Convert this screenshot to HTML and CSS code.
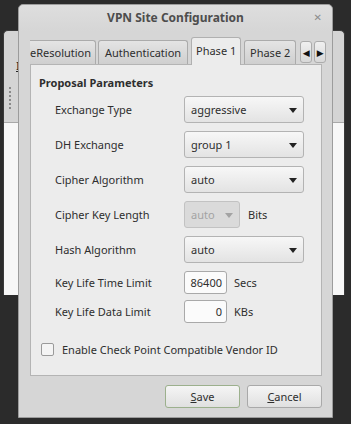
FILE: index.html
```html
<!DOCTYPE html>
<html lang="en">
<head>
    <meta charset="UTF-8">
    <meta name="viewport" content="width=device-width, initial-scale=1.0">
    <link rel="stylesheet" href="styles.css">
    <title>VPN Site Configuration</title>
</head>
<body>
    <div class="desktop">
        <!-- window behind the dialog -->
        <div class="parentWin">
            <span class="mnemonic">I</span>
            <div class="grip"></div>
            <div class="parentBody"></div>
        </div>

        <div class="dialog">
            <div class="titleBar">
                <span class="title">VPN Site Configuration</span>
                <span class="close">&#x2715;</span>
            </div>
            <div class="tabs">
                <div class="tab first">eResolution</div>
                <div class="tab">Authentication</div>
                <div class="tab active">Phase 1</div>
                <div class="tab">Phase 2</div>
                <div class="scroll">
                    <span class="arrow">&#9664;</span>
                    <span class="arrow">&#9654;</span>
                </div>
            </div>
            <div class="panel">
                <div class="groupTitle">Proposal Parameters</div>
                <div class="row">
                    <span class="label">Exchange Type</span>
                    <div class="combo">aggressive<span class="caret"></span></div>
                </div>
                <div class="row">
                    <span class="label">DH Exchange</span>
                    <div class="combo">group 1<span class="caret"></span></div>
                </div>
                <div class="row">
                    <span class="label">Cipher Algorithm</span>
                    <div class="combo">auto<span class="caret"></span></div>
                </div>
                <div class="row">
                    <span class="label">Cipher Key Length</span>
                    <div class="combo small disabled">auto<span class="caret"></span></div>
                    <span class="unit bits">Bits</span>
                </div>
                <div class="row">
                    <span class="label">Hash Algorithm</span>
                    <div class="combo">auto<span class="caret"></span></div>
                </div>
                <div class="row short">
                    <span class="label">Key Life Time Limit</span>
                    <div class="field">86400</div>
                    <span class="unit">Secs</span>
                </div>
                <div class="row short">
                    <span class="label">Key Life Data Limit</span>
                    <div class="field">0</div>
                    <span class="unit">KBs</span>
                </div>
                <div class="check">
                    <span class="box"></span>
                    <span>Enable Check Point Compatible Vendor ID</span>
                </div>
            </div>
            <div class="buttons">
                <button class="default"><u>S</u>ave</button>
                <button><u>C</u>ancel</button>
            </div>
        </div>
    </div>
</body>
</html>
```

FILE: styles.css
```css
*{box-sizing:border-box}
body{margin:0;background-color:#2b2b2b;font-family:"Noto Sans","DejaVu Sans",sans-serif;font-size:11px;color:#2e2e2e}
.desktop{position:relative;width:351px;height:424px;overflow:hidden}

.parentWin{position:absolute;left:3px;top:30px;width:342px;height:265px;background-color:#d4d4d4;border-radius:5px 5px 0 0;border:1px solid #3a3a3a;border-bottom:none}
.parentBody{position:absolute;left:0;right:0;top:91px;bottom:0;background-color:#f7f7f7;border-top:1px solid #a8a8a8}
.grip{position:absolute;left:5px;top:56px;width:2px;height:24px;background-image:linear-gradient(#8a8a8a 50%,transparent 50%);background-size:2px 4px}
.mnemonic{position:absolute;left:12px;top:27px;font-size:11px;text-decoration:underline;color:#222}

.dialog{position:absolute;left:18px;top:4px;width:315px;height:414px;background-color:#d6d6d6;border:1px solid #9c9c9c;border-radius:5px 5px 0 0;display:flex;flex-direction:column;padding:0 10px 0 11px}
.titleBar{height:26px;display:flex;align-items:center;justify-content:center;position:relative;margin:0 -10px 0 -11px;background:linear-gradient(#dedede,#d6d6d6);border-radius:5px 5px 0 0;padding-bottom:1px}
.title{font-weight:bold;font-size:12px;color:#4d4d4d}
.close{position:absolute;right:10px;top:5px;font-size:10px;color:#8c8c8c;font-weight:bold}

.tabs{display:flex;align-items:flex-end;height:33px;white-space:nowrap}
.tab{height:24px;padding:0 6px;display:flex;align-items:center;background:linear-gradient(#e4e4e4,#cfcfcf);border:1px solid #ababab;border-bottom:none;border-radius:3px 3px 0 0;margin-right:3px;color:#2e2e2e}
.tab.first{border-left:none;border-radius:0 3px 0 0;padding-left:0;width:66px;margin-right:2px}
.tab.active{height:28px;background:#ececec;border-color:#b0b0b0;position:relative;top:1px;padding-bottom:3px;width:50px;justify-content:center}
.tab:nth-child(4){width:52px;justify-content:center}
.scroll{display:flex;gap:2px;margin-left:1px;margin-bottom:1px}
.arrow{width:12px;height:22px;display:flex;align-items:center;justify-content:center;font-size:9px;background:linear-gradient(#f0f0f0,#d8d8d8);border:1px solid #acacac;border-radius:3px;color:#111}

.panel{height:312px;background-color:#ececec;border:1px solid #b4b4b4;padding:9px 0 0 8px}
.groupTitle{font-weight:bold;height:22px;line-height:17px}
.row{display:flex;align-items:flex-start;height:35px;padding-left:16px}
.row.short{height:29px}
.label{width:129px;line-height:27px}
.row.short .label{line-height:23px}
.combo{width:120px;height:27px;border:1px solid #b3b3b3;border-radius:3px;background:linear-gradient(#f7f7f7,#e3e3e3);padding-left:6px;line-height:25px;position:relative}
.caret{position:absolute;right:6px;top:11px;border-left:4px solid transparent;border-right:4px solid transparent;border-top:5px solid #222}
.combo.small{width:56px}
.combo.disabled{background:#dadada;color:#a3a3a3;border-color:#c2c2c2}
.combo.disabled .caret{border-top-color:#a3a3a3}
.unit{line-height:23px;margin-left:7px}
.unit.bits{line-height:27px;margin-left:8px}
.field{width:43px;height:23px;background-color:#fbfbfb;border:1px solid #a9a9a9;border-radius:3px;text-align:right;padding-right:4px;line-height:21px}
.check{display:flex;align-items:center;gap:8px;margin-top:13px;padding-left:2px}
.box{width:13px;height:13px;border:1px solid #9a9a9a;border-radius:2px;background-color:#f4f4f4}

.buttons{display:flex;justify-content:flex-end;gap:7px;margin-top:9px}
button{width:75px;height:23px;font-family:inherit;font-size:11px;color:#2e2e2e;background:linear-gradient(#f5f5f5,#e0e0e0);border:1px solid #a9a9a9;border-radius:3px;padding:0}
button.default{border-color:#9cb08d}
```
